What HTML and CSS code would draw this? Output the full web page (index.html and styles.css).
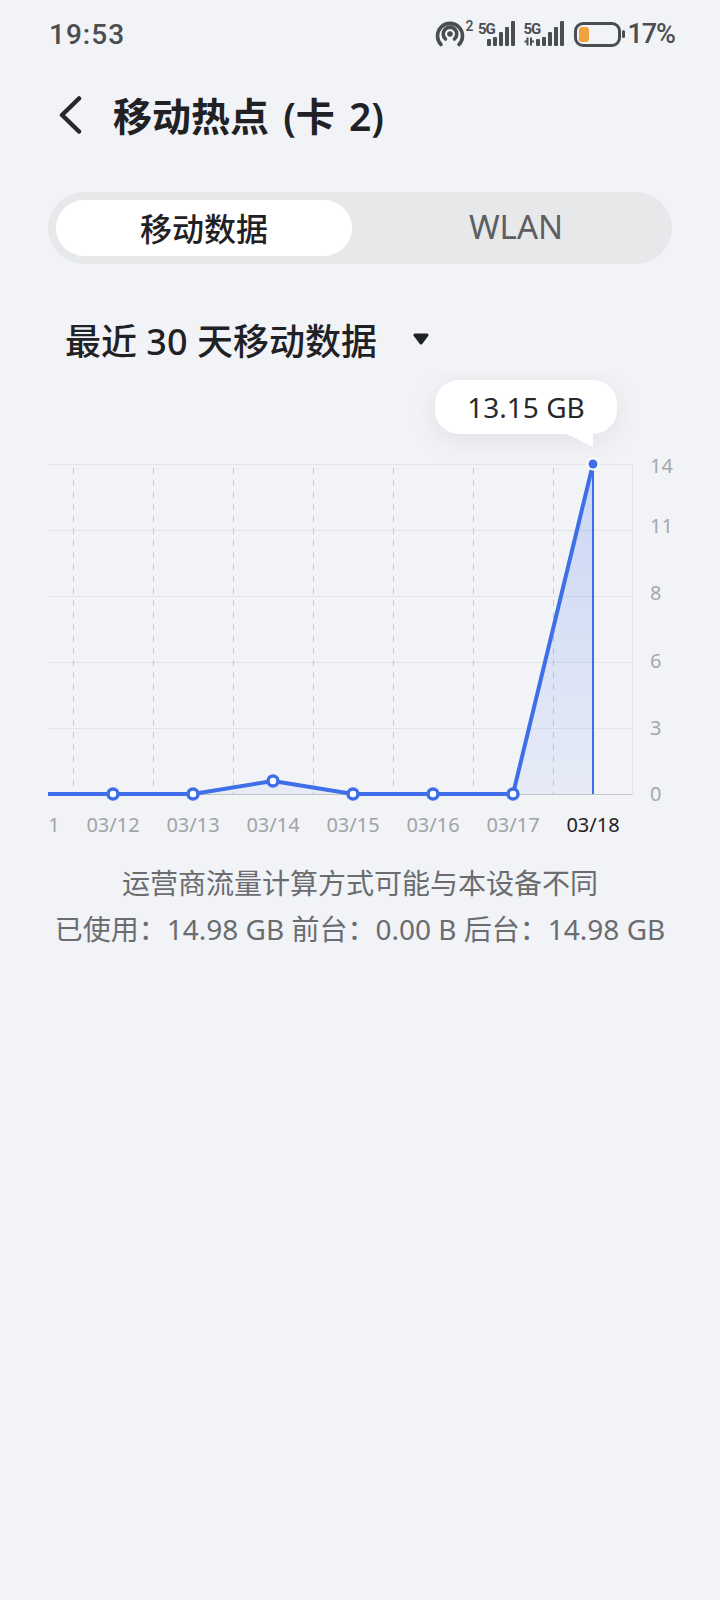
FILE: index.html
```html
<!DOCTYPE html>
<html lang="zh-CN">
  <head>
    <meta charset="UTF-8" />
    <meta name="viewport" content="width=device-width, initial-scale=1.0" />
    <title>移动热点 (卡 2)</title>
    <link rel="stylesheet" href="styles.css">
  </head>
  <body>
    <div class="status-bar">
      <span class="time">19:53</span>
      <div class="status-icons">
        <svg class="net-icons" width="130" height="34" viewBox="436 17 130 34">
          <g fill="none" stroke="#4a4d52" stroke-width="3.6" stroke-linecap="round">
            <path d="M442 44.500a12.500 12.500 0 1 1 18 0" />
            <path d="M446.500 39a6.800 6.800 0 1 1 9 0" />
          </g>
          <circle cx="451" cy="34" r="2.800" fill="#4a4d52" />
          <text x="466.500" y="31" class="sup">2</text>
          <text x="479" y="34" class="five-g">5G</text>
          <g fill="#4a4d52">
            <rect x="488" y="39" width="4" height="7" rx="1" />
            <rect x="494" y="37" width="4" height="9" rx="1" />
            <rect x="500" y="32" width="4" height="14" rx="1" />
            <rect x="506" y="27" width="4" height="19" rx="1" />
            <rect x="512" y="21" width="4" height="25" rx="1" />
          </g>
          <text x="524.500" y="34" class="five-g">5G</text>
          <path d="M528.500 37.500v8M525.500 41.500h3M532 37.500v8M532 41.500h3" stroke="#4a4d52" stroke-width="2" fill="none" />
          <g fill="#4a4d52">
            <rect x="537" y="39" width="4" height="7" rx="1" />
            <rect x="543" y="37" width="4" height="9" rx="1" />
            <rect x="549" y="32" width="4" height="14" rx="1" />
            <rect x="555" y="27" width="4" height="19" rx="1" />
            <rect x="561" y="21" width="4" height="25" rx="1" />
          </g>
        </svg>
        <div class="battery">
          <div class="battery-body"><div class="battery-level"></div></div>
          <div class="battery-nub"></div>
        </div>
        <span class="percent">17%</span>
      </div>
    </div>

    <div class="title-bar">
      <svg class="back" width="24" height="38" viewBox="0 0 24 38">
        <path d="M21 2.500 4 19l17 16.500" fill="none" stroke="#26282c" stroke-width="4.500" stroke-linecap="round" stroke-linejoin="round" />
      </svg>
      <h1>移动热点 (卡 2)</h1>
    </div>

    <div class="tabs">
      <div class="tab active">移动数据</div>
      <div class="tab wlan">WLAN</div>
    </div>

    <div class="range">
      <span>最近 30 天移动数据</span>
      <svg class="caret" width="16" height="12" viewBox="0 0 16 12">
        <path d="M2 2H14L8 10Z" fill="#1f2125" stroke="#1f2125" stroke-width="3" stroke-linejoin="round" />
      </svg>
    </div>

    <div class="chart">
      <svg width="720" height="480" viewBox="0 370 720 480">
        <defs>
          <linearGradient id="area" x1="0" y1="0" x2="0" y2="1">
            <stop offset="0" stop-color="#3f6fe8" stop-opacity="0.22" />
            <stop offset="1" stop-color="#3f6fe8" stop-opacity="0.06" />
          </linearGradient>
          <clipPath id="plot"><rect x="48" y="370" width="600" height="480" /></clipPath>
        </defs>
        <g class="grid">
          <path d="M48 464.500H632M48 530.500H632M48 596.500H632M48 662.500H632M48 728.500H632M632.500 464V795" />
        </g>
        <g class="dash">
          <path d="M73.500 468V794M153.500 468V794M233.500 468V794M313.500 468V794M393.500 468V794M473.500 468V794M553.500 468V794" />
        </g>
        <path class="base" d="M48 794.500H632" />
        <path d="M193 794 273 781 353 794 513 794 593 464V794Z" fill="url(#area)" />
        <path class="drop" d="M593 464V794" />
        <path class="line" d="M48 794H193L273 781 353 794H513L593 464" />
        <g class="dot">
          <circle cx="113" cy="794" r="5" />
          <circle cx="193" cy="794" r="5" />
          <circle cx="273" cy="781" r="5" />
          <circle cx="353" cy="794" r="5" />
          <circle cx="433" cy="794" r="5" />
          <circle cx="513" cy="794" r="5" />
        </g>
        <circle cx="593" cy="464" r="6.500" fill="#fff" />
        <circle cx="593" cy="464" r="4.500" fill="#3f6fe8" />
        <g class="y-labels">
          <text x="650" y="473">14</text>
          <text x="650" y="533">11</text>
          <text x="650" y="600">8</text>
          <text x="650" y="668">6</text>
          <text x="650" y="735">3</text>
          <text x="650" y="801">0</text>
        </g>
        <g class="x-labels" clip-path="url(#plot)">
          <text x="33" y="832">03/11</text>
          <text x="113" y="832">03/12</text>
          <text x="193" y="832">03/13</text>
          <text x="273" y="832">03/14</text>
          <text x="353" y="832">03/15</text>
          <text x="433" y="832">03/16</text>
          <text x="513" y="832">03/17</text>
          <text x="593" y="832" class="current">03/18</text>
        </g>
      </svg>
      <div class="tooltip-clip">
        <div class="tooltip">13.15 GB<span class="tooltip-tail"></span></div>
      </div>
    </div>

    <div class="note">
      <p>运营商流量计算方式可能与本设备不同</p>
      <p>已使用：14.98 GB 前台：0.00 B 后台：14.98 GB</p>
    </div>
  </body>
</html>
```

FILE: styles.css
```css
html,
body {
  margin: 0;
  padding: 0;
}
body {
  width: 720px;
  height: 1600px;
  overflow: hidden;
  background: #f1f3f7;
  font-family: "Noto Sans", "Noto Sans CJK SC", sans-serif;
  color: #1f2125;
}
.status-bar {
  height: 68px;
  padding: 0 45px 0 49px;
  display: flex;
  align-items: center;
  justify-content: space-between;
  color: #4a4d52;
  font-family: Roboto, sans-serif;
}
.time {
  font-size: 28px;
  font-weight: 500;
  letter-spacing: 1px;
}
.status-icons {
  display: flex;
  align-items: center;
}
.net-icons {
  display: block;
}
.sup {
  font-size: 14px;
  font-weight: 500;
  fill: #4a4d52;
}
.five-g {
  font-size: 15px;
  font-weight: 700;
  letter-spacing: -1px;
  fill: #4a4d52;
}
.battery {
  display: flex;
  align-items: center;
  margin-left: 9px;
}
.battery-body {
  width: 47px;
  height: 25px;
  box-sizing: border-box;
  padding: 2px;
  border: 3px solid #4a4d52;
  border-radius: 9px;
}
.battery-level {
  width: 10px;
  height: 15px;
  background: #f0a33c;
  border-radius: 3px;
}
.battery-nub {
  width: 3px;
  height: 8px;
  margin-left: 1px;
  background: #4a4d52;
  border-radius: 2px;
}
.percent {
  margin-left: 2px;
  font-size: 27px;
  font-weight: 500;
  letter-spacing: -1px;
}
.title-bar {
  height: 92px;
  padding-left: 58px;
  padding-bottom: 4px;
  display: flex;
  align-items: center;
}
.back {
  display: block;
  margin-top: 2px;
}
h1 {
  margin: 0 0 0 31px;
  font-size: 39px;
  font-weight: 600;
  word-spacing: 4px;
}
.tabs {
  margin: 28px 48px 0;
  height: 72px;
  padding: 8px;
  box-sizing: border-box;
  display: flex;
  background: #e6e8ea;
  border-radius: 36px;
}
.tab {
  display: flex;
  align-items: center;
  justify-content: center;
  padding-bottom: 3px;
  font-size: 32px;
  color: #5c5e62;
  border-radius: 28px;
}
.tab.active {
  width: 296px;
  background: #fff;
  color: #1f2125;
  font-weight: 500;
}
.tab.wlan {
  flex: 1;
  padding-left: 16px;
  font-size: 33px;
}
.range {
  margin: 47px 0 0 65px;
  height: 56px;
  display: flex;
  align-items: center;
  font-size: 36px;
  font-weight: 500;
}
.caret {
  display: block;
  margin-left: 36px;
}
.chart {
  position: relative;
  height: 480px;
  margin-top: 3px;
}
.chart svg {
  display: block;
}
.grid path {
  fill: none;
  stroke: #e2e4e8;
  stroke-width: 1;
}
.dash path {
  fill: none;
  stroke: #c8cace;
  stroke-width: 1;
  stroke-dasharray: 6 6;
}
.base {
  stroke: #c4c6ca;
  stroke-width: 1;
}
.drop {
  stroke: #3f6fe8;
  stroke-width: 2;
}
.line {
  fill: none;
  stroke: #3f6fe8;
  stroke-width: 4;
  stroke-linejoin: round;
}
.dot circle {
  fill: #fff;
  stroke: #3f6fe8;
  stroke-width: 3.5;
}
.y-labels text {
  font-size: 20px;
  fill: #a5a7ab;
}
.x-labels text {
  font-size: 20px;
  text-anchor: middle;
  fill: #a1a3a7;
}
.x-labels .current {
  fill: #1f2125;
}
.tooltip-clip {
  position: absolute;
  left: 48px;
  top: 2px;
  width: 585px;
  height: 92px;
  overflow: hidden;
}
.tooltip {
  position: absolute;
  left: 387px;
  top: 8px;
  width: 182px;
  height: 54px;
  display: flex;
  align-items: center;
  justify-content: center;
  background: #fff;
  border-radius: 24px;
  font-size: 28px;
  color: #26282c;
  box-shadow: 0 6px 30px rgba(0, 0, 0, 0.08);
}
.tooltip-tail {
  position: absolute;
  left: 128px;
  top: 52px;
  width: 0;
  height: 0;
  border-left: 30px solid transparent;
  border-top: 15px solid #fff;
}
.note {
  margin-top: 10px;
  text-align: center;
  font-size: 28px;
  color: #6a6c70;
}
.note p {
  margin: 0;
  line-height: 46px;
}
```
